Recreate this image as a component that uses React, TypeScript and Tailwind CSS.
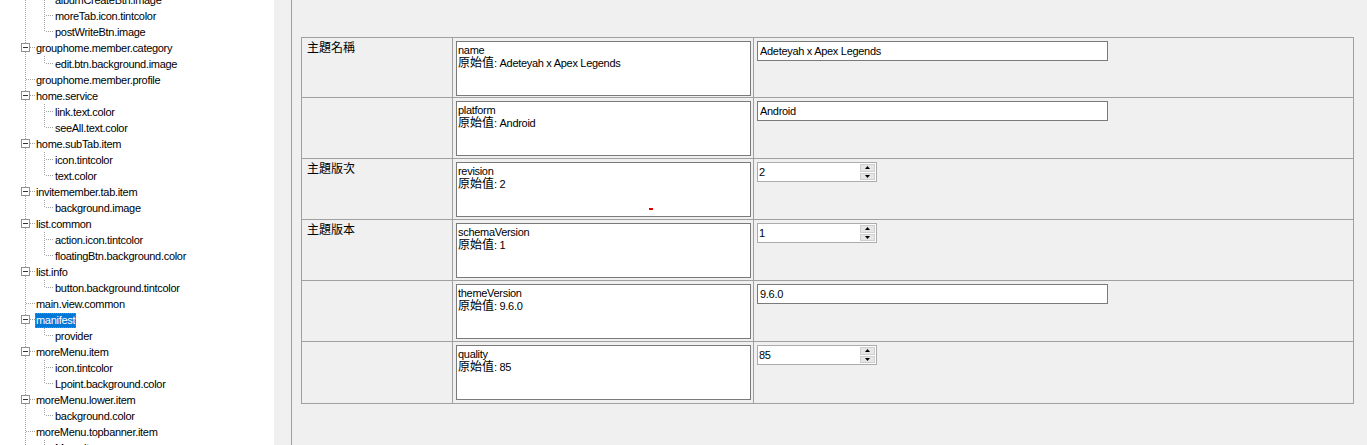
import React from "react";

type Row = { t: string; l: 1 | 2; exp?: boolean; last?: boolean; sel?: boolean };

const rows: Row[] = [
  { t: "albumCreateBtn.image", l: 2 },
  { t: "moreTab.icon.tintcolor", l: 2 },
  { t: "postWriteBtn.image", l: 2, last: true },
  { t: "grouphome.member.category", l: 1, exp: true },
  { t: "edit.btn.background.image", l: 2, last: true },
  { t: "grouphome.member.profile", l: 1 },
  { t: "home.service", l: 1, exp: true },
  { t: "link.text.color", l: 2 },
  { t: "seeAll.text.color", l: 2, last: true },
  { t: "home.subTab.item", l: 1, exp: true },
  { t: "icon.tintcolor", l: 2 },
  { t: "text.color", l: 2, last: true },
  { t: "invitemember.tab.item", l: 1, exp: true },
  { t: "background.image", l: 2, last: true },
  { t: "list.common", l: 1, exp: true },
  { t: "action.icon.tintcolor", l: 2 },
  { t: "floatingBtn.background.color", l: 2, last: true },
  { t: "list.info", l: 1, exp: true },
  { t: "button.background.tintcolor", l: 2, last: true },
  { t: "main.view.common", l: 1 },
  { t: "manifest", l: 1, exp: true, sel: true },
  { t: "provider", l: 2, last: true },
  { t: "moreMenu.item", l: 1, exp: true },
  { t: "icon.tintcolor", l: 2 },
  { t: "Lpoint.background.color", l: 2, last: true },
  { t: "moreMenu.lower.item", l: 1, exp: true },
  { t: "background.color", l: 2, last: true },
  { t: "moreMenu.topbanner.item", l: 1 },
  { t: "Menu.item", l: 2 },
];

const LINE = "#a0a0a0";

function Connector({ r }: { r: Row }) {
  const w = r.l === 1 ? 35 : 54;
  return (
    <svg width={w} height={16} className="shrink-0 block" shapeRendering="crispEdges">
      <line x1={25.5} y1={0} x2={25.5} y2={16} stroke={LINE} strokeWidth={1} strokeDasharray="1 1" />
      {r.l === 1 && (
        <line x1={r.exp ? 30 : 26} y1={7.5} x2={35} y2={7.5} stroke={LINE} strokeWidth={1} strokeDasharray="1 1" />
      )}
      {r.l === 1 && r.exp && (
        <g>
          <rect x={21.5} y={3.5} width={8} height={8} fill="#ffffff" stroke="#919191" strokeWidth={1} />
          <line x1={23} y1={7.5} x2={28} y2={7.5} stroke="#333333" strokeWidth={1} />
        </g>
      )}
      {r.l === 2 && (
        <g>
          <line x1={44.5} y1={0} x2={44.5} y2={r.last ? 8 : 16} stroke={LINE} strokeWidth={1} strokeDasharray="1 1" />
          <line x1={46} y1={7.5} x2={54} y2={7.5} stroke={LINE} strokeWidth={1} strokeDasharray="1 1" />
        </g>
      )}
    </svg>
  );
}

function Tree() {
  return (
    <div className="w-[274px] h-full bg-white overflow-hidden shrink-0">
      <div className="-mt-[8px] flex flex-col">
        {rows.map((r, i) => (
          <div key={i} className="h-[16px] flex items-center">
            <Connector r={r} />
            {r.sel ? (
              <span className="h-[15px] leading-[15px] px-[1px] bg-[#0078d7] text-white outline-1 outline-dotted outline-[#c07a30] -outline-offset-1 whitespace-nowrap">
                {r.t}
              </span>
            ) : (
              <span className="h-[15px] leading-[15px] px-[1px] text-black whitespace-nowrap">{r.t}</span>
            )}
          </div>
        ))}
      </div>
    </div>
  );
}

function Cjk({ children }: { children: React.ReactNode }) {
  return <span className="text-[12px] tracking-normal">{children}</span>;
}

function MemoBox({ name, value, mark }: { name: string; value: string; mark?: boolean }) {
  return (
    <div className="relative mt-[3px] ml-[3px] w-[295px] h-[55px] bg-white border border-[#7a7a7a] pl-[1px] pt-[2px] leading-[13px] text-black">
      <div>{name}</div>
      <div>
        <Cjk>原始值</Cjk>: {value}
      </div>
      {mark && <div className="absolute left-[192px] top-[45px] w-[4px] h-[2px] bg-[#e00000]" />}
    </div>
  );
}

function TextBox({ value }: { value: string }) {
  return (
    <div className="mt-[3px] ml-[3px] w-[351px] h-[20px] bg-white border border-[#7a7a7a] pl-[2px] flex items-center text-black">
      {value}
    </div>
  );
}

function Spinner({ value }: { value: string }) {
  return (
    <div className="mt-[3px] ml-[3px] w-[120px] h-[20px] bg-white border border-[#acacac] flex">
      <div className="flex-1 pl-[1px] flex items-center text-black">{value}</div>
      <div className="w-[16px] flex flex-col gap-px py-px pr-px">
        <div className="flex-1 bg-[#e6e6e6] border border-[#cfcfcf] flex items-center justify-center">
          <svg width="5" height="3" className="block">
            <polygon points="2.5,0 5,3 0,3" fill="#000" />
          </svg>
        </div>
        <div className="flex-1 bg-[#e6e6e6] border border-[#cfcfcf] flex items-center justify-center">
          <svg width="5" height="3" className="block">
            <polygon points="0,0 5,0 2.5,3" fill="#000" />
          </svg>
        </div>
      </div>
    </div>
  );
}

type Prop = { label: string; name: string; value: string; kind: "text" | "num"; mark?: boolean };

const props: Prop[] = [
  { label: "主題名稱", name: "name", value: "Adeteyah x Apex Legends", kind: "text" },
  { label: "", name: "platform", value: "Android", kind: "text" },
  { label: "主題版次", name: "revision", value: "2", kind: "num", mark: true },
  { label: "主題版本", name: "schemaVersion", value: "1", kind: "num" },
  { label: "", name: "themeVersion", value: "9.6.0", kind: "text" },
  { label: "", name: "quality", value: "85", kind: "num" },
];

export default function App() {
  return (
    <div className="w-[1367px] h-[445px] overflow-hidden flex bg-[#f0f0f0] font-['Liberation_Sans','Noto_Sans_CJK_TC',sans-serif] text-[11px] tracking-[-0.3px]">
      <Tree />
      <div className="w-[17px] shrink-0 bg-[#f0f0f0]" />
      <div className="w-px shrink-0 bg-[#9fa0a6]" />
      <div className="flex-1 pl-[9px] pt-[37px]">
        <div className="w-[1053px] border border-[#a0a0a0] flex flex-col divide-y divide-[#a0a0a0]">
          {props.map((p, i) => (
            <div key={i} className="h-[61px] first:h-[60px] flex">
              <div className="w-[151px] shrink-0 border-r border-[#a0a0a0] pl-[5px] pt-[1px] text-black">
                <Cjk>{p.label}</Cjk>
              </div>
              <div className="w-[301px] shrink-0 border-r border-[#a0a0a0]">
                <MemoBox name={p.name} value={p.value} mark={p.mark} />
              </div>
              <div className="flex-1">
                {p.kind === "text" ? <TextBox value={p.value} /> : <Spinner value={p.value} />}
              </div>
            </div>
          ))}
        </div>
      </div>
    </div>
  );
}
